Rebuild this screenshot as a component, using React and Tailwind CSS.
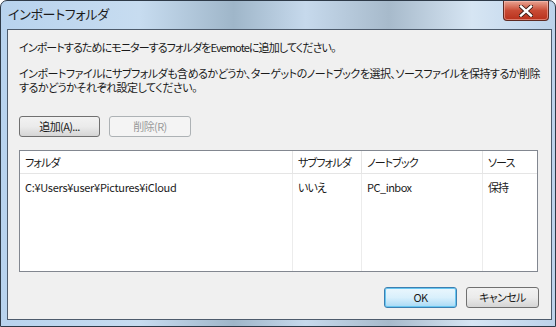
import React from "react";

const jp = "font-['Meiryo_UI','Noto_Sans_CJK_JP',sans-serif] [font-feature-settings:'palt']";

function WinButton({ children, disabled, primary, className = "" }) {
  let skin = "border-[#707070] bg-gradient-to-b from-[#f2f2f2] via-[#ebebeb] to-[#d5d5d5] text-[#1a1a1a]";
  if (disabled) skin = "border-[#adb2b5] bg-[#f4f4f4] text-[#9a9a9a]";
  if (primary) skin = "border-[#3c7fb1] bg-gradient-to-b from-[#eaf6fd] via-[#d9f0fc] to-[#a7d9f5] text-[#1a1a1a] shadow-[inset_0_0_0_1px_#68c6f0]";
  return (
    <button
      className={`flex h-[21px] items-center justify-center rounded-[3px] border text-[11px] leading-none tracking-[-0.6px] ${skin} ${className}`}
    >
      {children}
    </button>
  );
}

const rows = [
  { folder: "C:¥Users¥user¥Pictures¥iCloud", sub: "いいえ", nb: "PC_inbox", src: "保持" },
];

export default function App() {
  return (
    <div className={`h-[327px] w-[556px] bg-white ${jp}`}>
      <div className="flex h-[327px] w-[556px] flex-col overflow-hidden rounded-t-[7px] border border-[#2e3a48] bg-[linear-gradient(90deg,#b8d3ee_0%,#c7dcf0_25%,#9fb6c9_42%,#c6d9ec_55%,#a7bacb_70%,#d6e5f3_85%,#bcd2ea_100%)]">
        {/* title bar */}
        <div className="flex h-[27px] shrink-0 items-start justify-between">
          <span className="pl-[7px] pt-[5px] text-[13px] leading-[16px] tracking-[-0.3px] text-[#1b1b1b]">インポートフォルダ</span>
          <div className="mr-[6px] flex h-[20px] w-[46px] items-center justify-center rounded-b-[4px] border border-t-0 border-[#5e2a22] bg-gradient-to-b from-[#e8a493] via-[#c94b35] to-[#b8301b] shadow-[inset_0_0_0_1px_rgba(255,200,190,0.5)]">
            <svg width="14" height="12" viewBox="0 0 14 12">
              <path d="M2 1.5 L12 10.5 M12 1.5 L2 10.5" stroke="#3a1a14" strokeWidth="4.2" strokeLinecap="square" />
              <path d="M2 1.5 L12 10.5 M12 1.5 L2 10.5" stroke="#ffffff" strokeWidth="2.4" strokeLinecap="square" />
            </svg>
          </div>
        </div>

        {/* client area */}
        <div className="flex flex-1 px-[6px] pt-[1px] pb-[6px]">
          <div className="flex flex-1 flex-col border border-[#4d5b6c] bg-[#f0f0f0] px-[11px] text-[11px] leading-[14px] tracking-[-0.9px] text-[#1a1a1a]">
            <p className="mt-[10px]">インポートするためにモニターするフォルダをEvernoteに追加してください。</p>
            <p className="mt-[12px] whitespace-nowrap tracking-[-0.5px]">
              インポートファイルにサブフォルダも含めるかどうか、ターゲットのノートブックを選択、ソースファイルを保持するか削除
              <br />
              するかどうかそれぞれ設定してください。
            </p>

            <div className="mt-[22px] flex gap-[9px]">
              <WinButton className="w-[81px]">追加(A)...</WinButton>
              <WinButton disabled className="w-[82px]">削除(R)</WinButton>
            </div>

            {/* list view */}
            <div className="mt-[13px] h-[122px] w-[519px] border border-[#828790] bg-white">
              <div className="grid h-full grid-cols-[273px_69px_121px_1fr] grid-rows-[23px_1fr] whitespace-nowrap">
                {["フォルダ", "サブフォルダ", "ノートブック", "ソース"].map((h, i) => (
                  <div
                    key={h}
                    className={`flex items-center border-b border-[#e5e5e5] pl-[5px] ${i < 3 ? "border-r" : ""}`}
                  >
                    {h}
                  </div>
                ))}
                {rows.map((r) => (
                  <React.Fragment key={r.folder}>
                    <div className="border-r border-[#ececec] pl-[5px] pt-[6px] tracking-[-0.3px]">{r.folder}</div>
                    <div className="border-r border-[#ececec] pl-[5px] pt-[6px]">{r.sub}</div>
                    <div className="border-r border-[#ececec] pl-[5px] pt-[6px] tracking-[-0.5px]">{r.nb}</div>
                    <div className="pl-[5px] pt-[6px]">{r.src}</div>
                  </React.Fragment>
                ))}
              </div>
            </div>

            <div className="mt-[15px] flex justify-end gap-[9px] pr-[1px]">
              <WinButton primary className="w-[73px]">OK</WinButton>
              <WinButton className="w-[73px]">キャンセル</WinButton>
            </div>
          </div>
        </div>
      </div>
    </div>
  );
}
